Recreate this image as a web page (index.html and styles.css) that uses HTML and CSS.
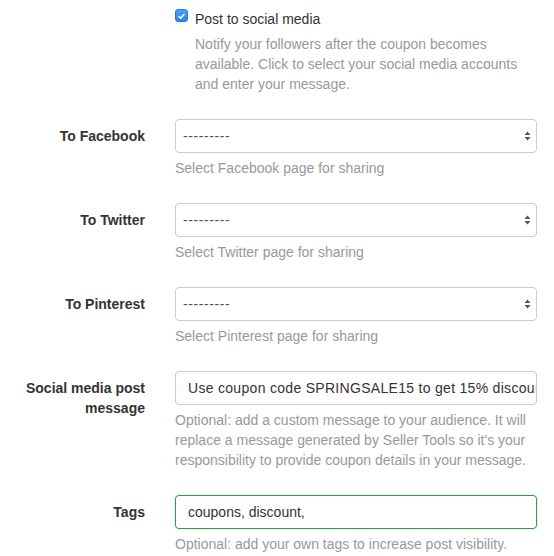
FILE: index.html
```
<!DOCTYPE html>
<html>
<head>
<meta charset="utf-8">
<link rel="stylesheet" href="styles.css">
</head>
<body>
<form class="form">
  <div class="group">
    <div class="label-col"></div>
    <div class="control-col">
      <div class="check">
        <span class="checkbox"><svg width="13" height="13" viewBox="0 0 13 13"><path d="M3.6 6.6 L5.6 8.6 L9.4 4.2" fill="none" stroke="#fff" stroke-width="1.8" stroke-linecap="round" stroke-linejoin="round"/></svg></span>
        <span class="check-text">Post to social media</span>
        <p class="help check-help">Notify your followers after the coupon becomes available. Click to select your social media accounts and enter your message.</p>
      </div>
    </div>
  </div>

  <div class="group">
    <label class="label-col">To Facebook</label>
    <div class="control-col">
      <div class="select"><span class="dashes">---------</span><svg class="arrows" width="7" height="10" viewBox="0 0 7 10"><path d="M3.5 0.5 L6.5 4 L0.5 4 Z M0.5 6 L6.5 6 L3.5 9.5 Z" fill="#555"/></svg></div>
      <p class="help">Select Facebook page for sharing</p>
    </div>
  </div>

  <div class="group">
    <label class="label-col">To Twitter</label>
    <div class="control-col">
      <div class="select"><span class="dashes">---------</span><svg class="arrows" width="7" height="10" viewBox="0 0 7 10"><path d="M3.5 0.5 L6.5 4 L0.5 4 Z M0.5 6 L6.5 6 L3.5 9.5 Z" fill="#555"/></svg></div>
      <p class="help">Select Twitter page for sharing</p>
    </div>
  </div>

  <div class="group">
    <label class="label-col">To Pinterest</label>
    <div class="control-col">
      <div class="select"><span class="dashes">---------</span><svg class="arrows" width="7" height="10" viewBox="0 0 7 10"><path d="M3.5 0.5 L6.5 4 L0.5 4 Z M0.5 6 L6.5 6 L3.5 9.5 Z" fill="#555"/></svg></div>
      <p class="help">Select Pinterest page for sharing</p>
    </div>
  </div>

  <div class="group">
    <label class="label-col">Social media post message</label>
    <div class="control-col">
      <div class="input input-message">Use coupon code SPRINGSALE15 to get 15% discount on all items</div>
      <p class="help">Optional: add a custom message to your audience. It will replace a message generated by Seller Tools so it's your responsibility to provide coupon details in your message.</p>
    </div>
  </div>

  <div class="group">
    <label class="label-col">Tags</label>
    <div class="control-col">
      <div class="input input-success">coupons, discount,</div>
      <p class="help">Optional: add your own tags to increase post visibility.</p>
    </div>
  </div>
</form>
</body>
</html>
```
FILE: styles.css
```
* { box-sizing: border-box; }
body {
  margin: 0;
  background: #fff;
  font-family: "Liberation Sans", Arial, Helvetica, sans-serif;
  font-size: 14px;
  line-height: 20px;
  color: #333;
}
.form {
  display: flex;
  flex-direction: column;
  gap: 15px;
  padding: 9px 17px 0 0;
}
.group {
  display: grid;
  grid-template-columns: 160px 1fr;
}
.label-col {
  padding: 7px 15px 0 0;
  text-align: right;
  font-weight: bold;
  color: #333;
}
.control-col {
  padding-left: 15px;
  min-width: 0;
}
.check {
  display: grid;
  grid-template-columns: 20px 1fr;
}
.checkbox {
  width: 13px;
  height: 13px;
  margin-top: 0;
  border-radius: 3px;
  background: linear-gradient(#4ea2f7, #2f83ee);
  border: 0.5px solid #2a78de;
  display: flex;
}
.check-text { color: #333; }
.check-help { grid-column: 2; margin-bottom: 11px; }
.help {
  margin: 5px 0 10px;
  color: #999;
}
.select, .input {
  height: 34px;
  border: 1px solid #ccc;
  border-radius: 4px;
  display: flex;
  align-items: center;
  white-space: nowrap;
  overflow: hidden;
  background: #fff;
}
.select {
  padding: 0 5px 0 7px;
  justify-content: space-between;
  color: #555;
}
.dashes { letter-spacing: 0.6px; }
.arrows { flex: none; }
.input {
  padding: 0 12px;
  color: #333;
}
.input-message { letter-spacing: 0.3px; }
.input-success {
  border-color: #3c9a3c;
  box-shadow: 0 0 3px rgba(102, 175, 233, 0.45);
}
```
